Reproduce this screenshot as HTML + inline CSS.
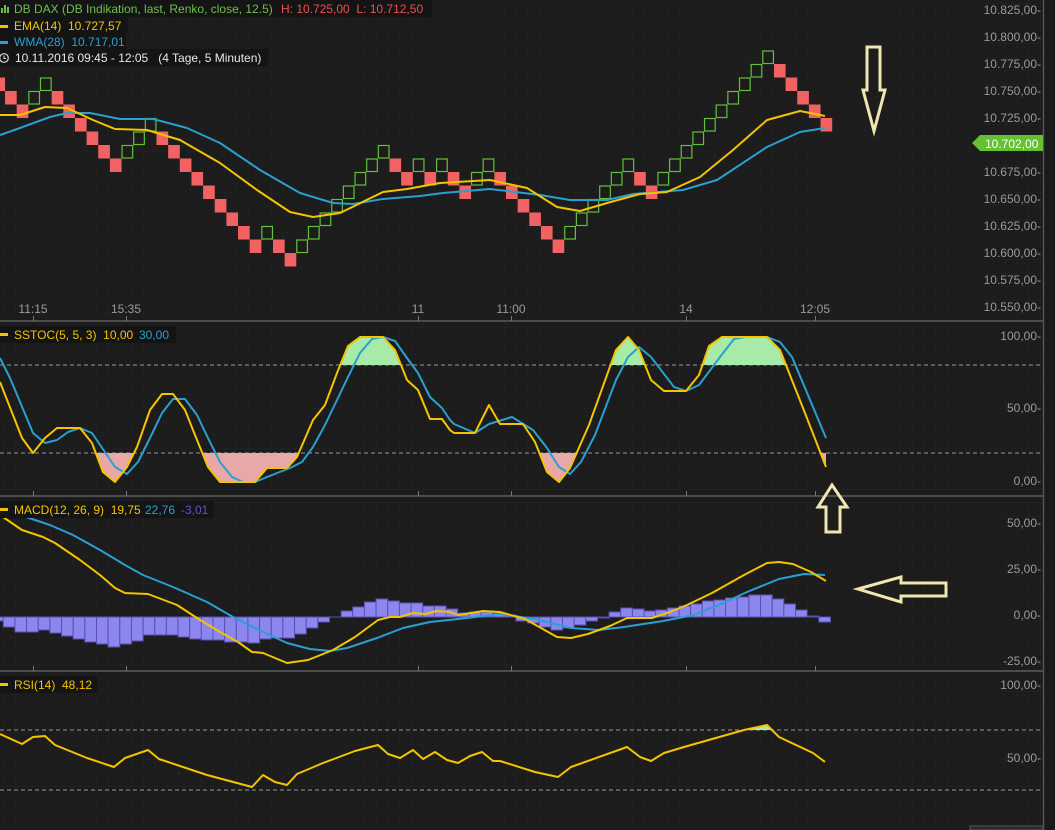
<!DOCTYPE html>
<html><head><meta charset="utf-8"><style>
html,body{margin:0;padding:0;background:#1c1c1c;overflow:hidden}
svg{display:block}
text{font-family:"Liberation Sans",sans-serif;font-size:12px;white-space:pre}
</style></head><body>
<svg width="1055" height="830" viewBox="0 0 1055 830" xmlns="http://www.w3.org/2000/svg" xml:space="preserve">
<defs>
<pattern id="grid" width="11.65" height="13.5" patternUnits="userSpaceOnUse" x="3.3" y="3">
<path d="M0 0H11.65M0 0V13.5" stroke="#242424" stroke-width="1" fill="none"/>
</pattern>
<clipPath id="above80"><rect x="0" y="320" width="1040" height="45"/></clipPath>
<clipPath id="below20"><rect x="0" y="453" width="1040" height="40"/></clipPath>
</defs>
<rect width="1055" height="830" fill="#1c1c1c"/>
<rect width="1043" height="830" fill="url(#grid)"/>
<rect x="1043" y="0" width="12" height="830" fill="#1a1a1a"/>
<line x1="1043.5" y1="0" x2="1043.5" y2="830" stroke="#555" stroke-width="1.5"/>

<g stroke="#6a6a6a" stroke-width="1.3">
<line x1="0" y1="321" x2="1043" y2="321"/>
<line x1="0" y1="496" x2="1043" y2="496"/>
<line x1="0" y1="671" x2="1043" y2="671"/>
</g>
<g stroke="#777" stroke-width="1">
<path d="M33.5 316V321M126.5 316V321M418.5 316V321M511.5 316V321M686.5 316V321M815.5 316V321"/>
<path d="M33.5 491V496M126.5 491V496M418.5 491V496M511.5 491V496M686.5 491V496M815.5 491V496"/>
<path d="M33.5 666V671M126.5 666V671M418.5 666V671M511.5 666V671M686.5 666V671M815.5 666V671"/>
</g>

<g fill="#f36262">
<rect x="-6.6" y="77.5" width="11.65" height="13.5"/>
<rect x="5.05" y="91" width="11.65" height="13.5"/>
<rect x="16.7" y="104.5" width="11.65" height="13.5"/>
<rect x="51.65" y="91" width="11.65" height="13.5"/>
<rect x="63.3" y="104.5" width="11.65" height="13.5"/>
<rect x="74.95" y="118" width="11.65" height="13.5"/>
<rect x="86.6" y="131.5" width="11.65" height="13.5"/>
<rect x="98.25" y="145" width="11.65" height="13.5"/>
<rect x="109.9" y="158.5" width="11.65" height="13.5"/>
<rect x="156.5" y="131.5" width="11.65" height="13.5"/>
<rect x="168.15" y="145" width="11.65" height="13.5"/>
<rect x="179.8" y="158.5" width="11.65" height="13.5"/>
<rect x="191.45" y="172" width="11.65" height="13.5"/>
<rect x="203.1" y="185.5" width="11.65" height="13.5"/>
<rect x="214.75" y="199" width="11.65" height="13.5"/>
<rect x="226.4" y="212.5" width="11.65" height="13.5"/>
<rect x="238.05" y="226" width="11.65" height="13.5"/>
<rect x="249.7" y="239.5" width="11.65" height="13.5"/>
<rect x="273" y="239.5" width="11.65" height="13.5"/>
<rect x="284.65" y="253" width="11.65" height="13.5"/>
<rect x="389.5" y="158.5" width="11.65" height="13.5"/>
<rect x="401.15" y="172" width="11.65" height="13.5"/>
<rect x="424.45" y="172" width="11.65" height="13.5"/>
<rect x="447.75" y="172" width="11.65" height="13.5"/>
<rect x="459.4" y="185.5" width="11.65" height="13.5"/>
<rect x="494.35" y="172" width="11.65" height="13.5"/>
<rect x="506" y="185.5" width="11.65" height="13.5"/>
<rect x="517.65" y="199" width="11.65" height="13.5"/>
<rect x="529.3" y="212.5" width="11.65" height="13.5"/>
<rect x="540.95" y="226" width="11.65" height="13.5"/>
<rect x="552.6" y="239.5" width="11.65" height="13.5"/>
<rect x="634.15" y="172" width="11.65" height="13.5"/>
<rect x="645.8" y="185.5" width="11.65" height="13.5"/>
<rect x="773.95" y="64" width="11.65" height="13.5"/>
<rect x="785.6" y="77.5" width="11.65" height="13.5"/>
<rect x="797.25" y="91" width="11.65" height="13.5"/>
<rect x="808.9" y="104.5" width="11.65" height="13.5"/>
<rect x="820.55" y="118" width="11.65" height="13.5"/>
</g>
<g fill="none" stroke="#62c03a" stroke-width="1.2">
<rect x="28.85" y="91.5" width="10.65" height="12.5"/>
<rect x="40.5" y="78" width="10.65" height="12.5"/>
<rect x="122.05" y="145.5" width="10.65" height="12.5"/>
<rect x="133.7" y="132" width="10.65" height="12.5"/>
<rect x="145.35" y="118.5" width="10.65" height="12.5"/>
<rect x="261.85" y="226.5" width="10.65" height="12.5"/>
<rect x="296.8" y="240" width="10.65" height="12.5"/>
<rect x="308.45" y="226.5" width="10.65" height="12.5"/>
<rect x="320.1" y="213" width="10.65" height="12.5"/>
<rect x="331.75" y="199.5" width="10.65" height="12.5"/>
<rect x="343.4" y="186" width="10.65" height="12.5"/>
<rect x="355.05" y="172.5" width="10.65" height="12.5"/>
<rect x="366.7" y="159" width="10.65" height="12.5"/>
<rect x="378.35" y="145.5" width="10.65" height="12.5"/>
<rect x="413.3" y="159" width="10.65" height="12.5"/>
<rect x="436.6" y="159" width="10.65" height="12.5"/>
<rect x="471.55" y="172.5" width="10.65" height="12.5"/>
<rect x="483.2" y="159" width="10.65" height="12.5"/>
<rect x="564.75" y="226.5" width="10.65" height="12.5"/>
<rect x="576.4" y="213" width="10.65" height="12.5"/>
<rect x="588.05" y="199.5" width="10.65" height="12.5"/>
<rect x="599.7" y="186" width="10.65" height="12.5"/>
<rect x="611.35" y="172.5" width="10.65" height="12.5"/>
<rect x="623" y="159" width="10.65" height="12.5"/>
<rect x="657.95" y="172.5" width="10.65" height="12.5"/>
<rect x="669.6" y="159" width="10.65" height="12.5"/>
<rect x="681.25" y="145.5" width="10.65" height="12.5"/>
<rect x="692.9" y="132" width="10.65" height="12.5"/>
<rect x="704.55" y="118.5" width="10.65" height="12.5"/>
<rect x="716.2" y="105" width="10.65" height="12.5"/>
<rect x="727.85" y="91.5" width="10.65" height="12.5"/>
<rect x="739.5" y="78" width="10.65" height="12.5"/>
<rect x="751.15" y="64.5" width="10.65" height="12.5"/>
<rect x="762.8" y="51" width="10.65" height="12.5"/>
</g>

<polyline fill="none" stroke="#2a9fd0" stroke-width="2" stroke-linejoin="round" points="0,135 20,128 50,117 67,113 90,113 120,119 153,119 187,128 220,143 260,170 300,193 333,203 353,204 383,199 420,196 443,193 490,189 540,195 570,200 607,200 633,194 683,190 717,180 767,147 800,132 825,128"/>
<polyline fill="none" stroke="#f5c400" stroke-width="2" stroke-linejoin="round" points="0,115 20,115 45,107 67,108 93,120 115,129 147,130 180,140 220,163 257,190 290,212 313,217 340,213 383,192 407,189 440,183 490,180 527,188 557,207 580,211 607,203 640,194 667,192 700,177 733,150 767,120 800,111 825,116"/>

<g fill="#9a9a9a" text-anchor="end">
<text x="1041" y="14">10.825,00-</text>
<text x="1041" y="41">10.800,00-</text>
<text x="1041" y="68">10.775,00-</text>
<text x="1041" y="95">10.750,00-</text>
<text x="1041" y="122">10.725,00-</text>
<text x="1041" y="176">10.675,00-</text>
<text x="1041" y="203">10.650,00-</text>
<text x="1041" y="230">10.625,00-</text>
<text x="1041" y="257">10.600,00-</text>
<text x="1041" y="284">10.575,00-</text>
<text x="1041" y="311">10.550,00-</text>
</g>
<polygon points="972,143 980,135 1043,135 1043,151 980,151" fill="#63c132"/>
<text x="985" y="148" fill="#fff">10.702,00</text>

<g fill="#9a9a9a" text-anchor="middle">
<text x="33" y="313">11:15</text>
<text x="126" y="313">15:35</text>
<text x="418" y="313">11</text>
<text x="511" y="313">11:00</text>
<text x="686" y="313">14</text>
<text x="815" y="313">12:05</text>
</g>

<rect x="0" y="0" width="432" height="17" fill="#141414"/>
<rect x="0" y="17" width="128" height="16" fill="#141414"/>
<rect x="0" y="33" width="126" height="16" fill="#141414"/>
<rect x="0" y="49" width="268" height="17" fill="#141414"/>
<g fill="#6cc04a"><rect x="1" y="8" width="2" height="5"/><rect x="4" y="5" width="2" height="8"/><rect x="7" y="7" width="2" height="6"/></g>
<text x="14" y="13" fill="#6cc04a">DB DAX (DB Indikation, last, Renko, close, 12.5)</text>
<text x="281" y="13" fill="#f05050">H: 10.725,00  L: 10.712,50</text>
<rect x="0" y="25" width="8" height="3" fill="#f5c400"/>
<text x="14" y="30" fill="#f5c400">EMA(14)  10.727,57</text>
<rect x="0" y="41" width="8" height="3" fill="#2a9fd0"/>
<text x="14" y="46" fill="#2a9fd0">WMA(28)  10.717,01</text>
<circle cx="4" cy="58" r="4.3" fill="none" stroke="#ddd" stroke-width="1.2"/>
<path d="M4 55.5V58.5H6" stroke="#ddd" stroke-width="1" fill="none"/>
<text x="15" y="62" fill="#e8e8e8">10.11.2016 09:45 - 12:05   (4 Tage, 5 Minuten)</text>

<path d="M867 47H880V90H885L874 131L863 90H867Z" fill="none" stroke="#f0e6b0" stroke-width="3" stroke-linejoin="miter"/>

<g stroke="#9a9a9a" stroke-dasharray="4 3" stroke-width="1">
<line x1="0" y1="365" x2="1043" y2="365"/>
<line x1="0" y1="453" x2="1043" y2="453"/>
</g>
<polygon clip-path="url(#above80)" fill="#a8eaa8" points="0,382 22,438 33,453 45,438 57,428 80,428 92,443 103,472 115,482 127,467 137,447 150,410 162,394 173,394 185,410 197,440 208,467 220,482 255,482 267,468 287,468 297,457 313,420 325,405 337,373 348,346 360,337 383,337 395,350 407,380 418,390 430,419 442,419 450,430 454,433 475,433 489,405 500,424 523,424 535,442 547,472 559,482 570,468 589,425 616,350 628,337 639,350 651,380 664,391 686,391 699,375 709,346 722,337 767,337 780,350 803,408 826,467 826,365 0,365"/>
<polygon clip-path="url(#below20)" fill="#e8a8a8" points="0,382 22,438 33,453 45,438 57,428 80,428 92,443 103,472 115,482 127,467 137,447 150,410 162,394 173,394 185,410 197,440 208,467 220,482 255,482 267,468 287,468 297,457 313,420 325,405 337,373 348,346 360,337 383,337 395,350 407,380 418,390 430,419 442,419 450,430 454,433 475,433 489,405 500,424 523,424 535,442 547,472 559,482 570,468 589,425 616,350 628,337 639,350 651,380 664,391 686,391 699,375 709,346 722,337 767,337 780,350 803,408 826,467 826,453 0,453"/>
<polyline fill="none" stroke="#2a9fd0" stroke-width="2" stroke-linejoin="round" points="0,358 10,378 33,433 45,443 57,440 68,432 80,428 92,433 115,467 127,474 138,462 150,438 162,413 173,399 185,399 197,415 208,438 220,462 232,477 243,482 255,482 267,477 290,468 302,462 313,447 325,425 337,400 348,377 360,353 372,339 383,337 395,341 407,358 418,373 430,397 442,408 450,420 454,424 475,433 489,424 512,417 533,430 547,448 559,467 570,474 581,462 595,435 616,380 628,357 639,347 651,357 674,387 686,391 699,385 720,357 734,339 745,337 767,337 780,342 792,357 826,438"/>
<polyline fill="none" stroke="#f5c400" stroke-width="2" stroke-linejoin="round" points="0,382 22,438 33,453 45,438 57,428 80,428 92,443 103,472 115,482 127,467 137,447 150,410 162,394 173,394 185,410 197,440 208,467 220,482 255,482 267,468 287,468 297,457 313,420 325,405 337,373 348,346 360,337 383,337 395,350 407,380 418,390 430,419 442,419 450,430 454,433 475,433 489,405 500,424 523,424 535,442 547,472 559,482 570,468 589,425 616,350 628,337 639,350 651,380 664,391 686,391 699,375 709,346 722,337 767,337 780,350 803,408 826,467"/>
<g fill="#9a9a9a" text-anchor="end">
<text x="1041" y="340">100,00-</text>
<text x="1041" y="412">50,00-</text>
<text x="1041" y="485">0,00-</text>
</g>
<rect x="0" y="326" width="176" height="17" fill="#141414"/>
<rect x="0" y="333" width="8" height="3" fill="#f5c400"/>
<text x="14" y="339" fill="#f5c400">SSTOC(5, 5, 3)  10,00</text>
<text x="139" y="339" fill="#2a9fd0">30,00</text>
<path d="M832 485L847 507H840V532H826V507H818Z" fill="none" stroke="#f0e6b0" stroke-width="3"/>

<g fill="#8b87ee" stroke="#5b4fb5" stroke-width="1">
<rect x="-8.35" y="617" width="11.65" height="4"/>
<rect x="3.3" y="617" width="11.65" height="10"/>
<rect x="14.95" y="617" width="11.65" height="15"/>
<rect x="26.6" y="617" width="11.65" height="15"/>
<rect x="38.25" y="617" width="11.65" height="13"/>
<rect x="49.9" y="617" width="11.65" height="16"/>
<rect x="61.55" y="617" width="11.65" height="19"/>
<rect x="73.2" y="617" width="11.65" height="22"/>
<rect x="84.85" y="617" width="11.65" height="25"/>
<rect x="96.5" y="617" width="11.65" height="27"/>
<rect x="108.15" y="617" width="11.65" height="30"/>
<rect x="119.8" y="617" width="11.65" height="27"/>
<rect x="131.45" y="617" width="11.65" height="24"/>
<rect x="143.1" y="617" width="11.65" height="18"/>
<rect x="154.75" y="617" width="11.65" height="18"/>
<rect x="166.4" y="617" width="11.65" height="18"/>
<rect x="178.05" y="617" width="11.65" height="20"/>
<rect x="189.7" y="617" width="11.65" height="22"/>
<rect x="201.35" y="617" width="11.65" height="23"/>
<rect x="213" y="617" width="11.65" height="23"/>
<rect x="224.65" y="617" width="11.65" height="25"/>
<rect x="236.3" y="617" width="11.65" height="25"/>
<rect x="247.95" y="617" width="11.65" height="26"/>
<rect x="259.6" y="617" width="11.65" height="22"/>
<rect x="271.25" y="617" width="11.65" height="21"/>
<rect x="282.9" y="617" width="11.65" height="21"/>
<rect x="294.55" y="617" width="11.65" height="17"/>
<rect x="306.2" y="617" width="11.65" height="11"/>
<rect x="317.85" y="617" width="11.65" height="5"/>
<rect x="341.15" y="611" width="11.65" height="6"/>
<rect x="352.8" y="607" width="11.65" height="10"/>
<rect x="364.45" y="602" width="11.65" height="15"/>
<rect x="376.1" y="599" width="11.65" height="18"/>
<rect x="387.75" y="601" width="11.65" height="16"/>
<rect x="399.4" y="603" width="11.65" height="14"/>
<rect x="411.05" y="603" width="11.65" height="14"/>
<rect x="422.7" y="606" width="11.65" height="11"/>
<rect x="434.35" y="606" width="11.65" height="11"/>
<rect x="446" y="609" width="11.65" height="8"/>
<rect x="457.65" y="613" width="11.65" height="4"/>
<rect x="469.3" y="612" width="11.65" height="5"/>
<rect x="480.95" y="612" width="11.65" height="5"/>
<rect x="492.6" y="613" width="11.65" height="4"/>
<rect x="504.25" y="615" width="11.65" height="2"/>
<rect x="515.9" y="617" width="11.65" height="4"/>
<rect x="527.55" y="617" width="11.65" height="6"/>
<rect x="539.2" y="617" width="11.65" height="10"/>
<rect x="550.85" y="617" width="11.65" height="13"/>
<rect x="562.5" y="617" width="11.65" height="11"/>
<rect x="574.15" y="617" width="11.65" height="8"/>
<rect x="585.8" y="617" width="11.65" height="4"/>
<rect x="597.45" y="617" width="11.65" height="1"/>
<rect x="609.1" y="612" width="11.65" height="5"/>
<rect x="620.75" y="608" width="11.65" height="9"/>
<rect x="632.4" y="609" width="11.65" height="8"/>
<rect x="644.05" y="611" width="11.65" height="6"/>
<rect x="655.7" y="610" width="11.65" height="7"/>
<rect x="667.35" y="608" width="11.65" height="9"/>
<rect x="679" y="606" width="11.65" height="11"/>
<rect x="690.65" y="604" width="11.65" height="13"/>
<rect x="702.3" y="601" width="11.65" height="16"/>
<rect x="713.95" y="600" width="11.65" height="17"/>
<rect x="725.6" y="598" width="11.65" height="19"/>
<rect x="737.25" y="597" width="11.65" height="20"/>
<rect x="748.9" y="595" width="11.65" height="22"/>
<rect x="760.55" y="595" width="11.65" height="22"/>
<rect x="772.2" y="599" width="11.65" height="18"/>
<rect x="783.85" y="604" width="11.65" height="13"/>
<rect x="795.5" y="610" width="11.65" height="7"/>
<rect x="807.15" y="616" width="11.65" height="1"/>
<rect x="818.8" y="617" width="11.65" height="5"/>
</g>
<line x1="0" y1="617" x2="831" y2="617" stroke="#5b4fb5" stroke-width="1"/>
<polyline fill="none" stroke="#2a9fd0" stroke-width="2" stroke-linejoin="round" points="0,510 20,515 50,525 73,535 100,550 125,565 143,575 173,587 207,602 233,617 263,632 287,643 310,649 330,651 347,648 377,638 403,628 430,622 467,618 500,614 535,619 571,628 599,630 624,627 663,621 694,615 719,605 747,592 779,579 804,574 825,575"/>
<polyline fill="none" stroke="#f5c400" stroke-width="2" stroke-linejoin="round" points="0,515 22,530 43,537 55,543 80,560 100,575 115,588 125,593 148,594 177,605 197,618 220,632 238,642 252,652 263,653 287,663 308,660 333,650 355,637 378,620 390,617 400,617 413,613 425,614 437,611 450,612 458,615 483,611 500,612 525,619 557,637 571,638 588,634 610,626 627,618 652,618 670,612 687,605 712,593 744,575 767,563 779,562 793,564 811,572 826,581"/>
<g fill="#9a9a9a" text-anchor="end">
<text x="1041" y="527">50,00-</text>
<text x="1041" y="573">25,00-</text>
<text x="1041" y="619">0,00-</text>
<text x="1041" y="665">-25,00-</text>
</g>
<rect x="0" y="501" width="214" height="17" fill="#141414"/>
<rect x="0" y="508" width="8" height="3" fill="#f5c400"/>
<text x="14" y="514" fill="#f5c400">MACD(12, 26, 9)  19,75</text>
<text x="145" y="514" fill="#2a9fd0">22,76</text>
<text x="181" y="514" fill="#5b56c8">-3,01</text>
<path d="M858 589L901 577V583H946V596H901V602Z" fill="none" stroke="#f0e6b0" stroke-width="3"/>

<g stroke="#9a9a9a" stroke-dasharray="4 3" stroke-width="1">
<line x1="0" y1="730" x2="1043" y2="730"/>
<line x1="0" y1="790" x2="1043" y2="790"/>
</g>
<polygon fill="#a8eaa8" points="744,730 767,725 772,730"/>
<polyline fill="none" stroke="#f5c400" stroke-width="2" stroke-linejoin="round" points="0,734 22,744 33,737 45,736 55,745 87,758 114,767 125,758 148,750 159,759 207,775 252,787 263,775 275,782 287,785 297,774 323,763 355,751 378,745 388,754 400,758 413,750 423,759 435,752 447,760 458,763 470,756 482,752 493,761 500,761 535,772 558,777 571,767 627,747 640,757 651,761 664,753 684,747 744,730 767,725 779,737 813,753 825,762"/>
<g fill="#9a9a9a" text-anchor="end">
<text x="1041" y="689">100,00-</text>
<text x="1041" y="762">50,00-</text>
</g>
<rect x="0" y="676" width="97" height="17" fill="#141414"/>
<rect x="0" y="683" width="8" height="3" fill="#f5c400"/>
<text x="14" y="689" fill="#f5c400">RSI(14)  48,12</text>
<rect x="970" y="826" width="73" height="4" fill="#2a2a2a" stroke="#555"/>
</svg>
</body></html>
